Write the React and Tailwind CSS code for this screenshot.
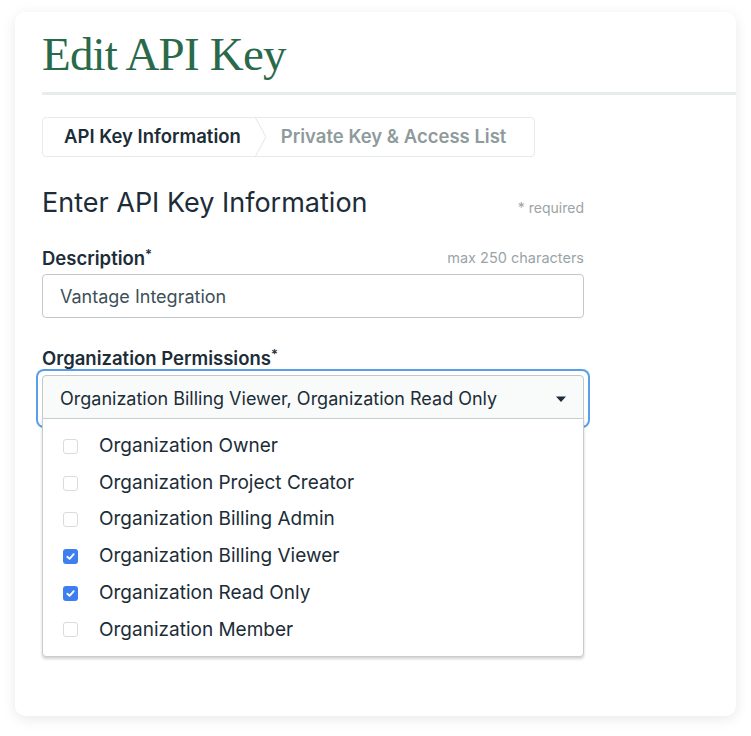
import React from "react";

const options = [
  { label: "Organization Owner", checked: false },
  { label: "Organization Project Creator", checked: false },
  { label: "Organization Billing Admin", checked: false },
  { label: "Organization Billing Viewer", checked: true },
  { label: "Organization Read Only", checked: true },
  { label: "Organization Member", checked: false },
];

const Checkbox = ({ checked }) =>
  checked ? (
    <span className="flex h-[15px] w-[15px] items-center justify-center rounded-[3px] bg-[#3d7ff0]">
      <svg viewBox="0 0 12 12" className="h-[11px] w-[11px]">
        <path
          d="M2.5 6.3 L5 8.6 L9.5 3.4"
          fill="none"
          stroke="white"
          strokeWidth="2"
          strokeLinecap="round"
          strokeLinejoin="round"
        />
      </svg>
    </span>
  ) : (
    <span className="h-[15px] w-[15px] rounded-[3px] border border-[#d8dcde] bg-white" />
  );

const App = () => {
  return (
    <div
      className="min-h-[736px] bg-white px-[15px] pt-[12px]"
      style={{ fontFamily: "Inter, 'Noto Sans', sans-serif" }}
    >
      <div className="h-[704px] rounded-[10px] bg-white pl-[27px] pt-[14px] shadow-[0_3px_14px_rgba(0,0,0,0.09)]">
        {/* Title */}
        <h1
          className="text-[47px] leading-[56px] tracking-[-0.8px] text-[#2a6a4b]"
          style={{ fontFamily: "'Liberation Serif', serif" }}
        >
          Edit API Key
        </h1>
        <div className="mt-[10px] h-[3px] bg-[#e8edeb]" />

        {/* Steps */}
        <div className="mt-[22px] flex h-[40px] w-[493px] items-center rounded-[4px] border border-[#e7eaeb]">
          <span className="pl-[21px] pr-[13px] text-[18.5px] font-semibold text-[#1c2d38]">
            API Key Information
          </span>
          <svg width="14" height="40" viewBox="0 0 14 40" className="shrink-0">
            <path d="M1 0 L12 20 L1 40" fill="none" stroke="#e3e6e7" strokeWidth="1" />
          </svg>
          <span className="pl-[13px] text-[18.5px] font-semibold text-[#8f9a9d]">
            Private Key &amp; Access List
          </span>
        </div>

        <div className="w-[542px]">
          {/* Section heading */}
          <div className="mt-[30px] flex items-end justify-between">
            <h2 className="text-[27px] leading-[32px] text-[#1c2d38]">Enter API Key Information</h2>
            <span className="pb-[1px] text-[14px] text-[#9aa4a7]">* required</span>
          </div>

          {/* Description */}
          <div className="mt-[28px] flex items-end justify-between">
            <label className="text-[18.5px] font-semibold leading-[22px] text-[#1c2d38]">
              Description<sup className="text-[13px]">*</sup>
            </label>
            <span className="text-[14.5px] text-[#9aa4a7]">max 250 characters</span>
          </div>
          <div className="mt-[5px] flex h-[44px] items-center rounded-[4px] border border-[#c2c8ca] px-[17px] text-[18px] text-[#3d4f58]">
            Vantage Integration
          </div>

          {/* Permissions */}
          <label className="mt-[29px] block text-[18.5px] font-semibold leading-[22px] text-[#1c2d38]">
            Organization Permissions<sup className="text-[13px]">*</sup>
          </label>
          <div className="relative mt-[6px]">
            <div className="-m-[4px] rounded-[6px] p-[2px] ring-2 ring-[#5a9ee8]">
              <div className="m-[2px] flex h-[47px] items-center justify-between rounded-t-[4px] border border-[#c2c8ca] bg-[#f9fbfa] pl-[17px] pr-[16px] text-[18px] text-[#1c2d38]">
                <span>Organization Billing Viewer, Organization Read Only</span>
                <svg width="12" height="8" viewBox="0 0 12 8">
                  <path d="M1 1.5 L11 1.5 L6 7 Z" fill="#1c2d38" />
                </svg>
              </div>
            </div>

            {/* Dropdown menu */}
            <div className="absolute left-0 right-0 top-[47px] z-10 rounded-b-[4px] border border-[#c8cdcf] bg-white pb-[8px] pt-[9px] shadow-[0_2px_3px_rgba(0,0,0,0.18)]">
              {options.map((o) => (
                <div key={o.label} className="flex h-[36.7px] items-center pl-[20px]">
                  <Checkbox checked={o.checked} />
                  <span className="ml-[21px] text-[19px] text-[#1c2d38]">{o.label}</span>
                </div>
              ))}
            </div>
          </div>
        </div>
      </div>
    </div>
  );
};

export default App;
